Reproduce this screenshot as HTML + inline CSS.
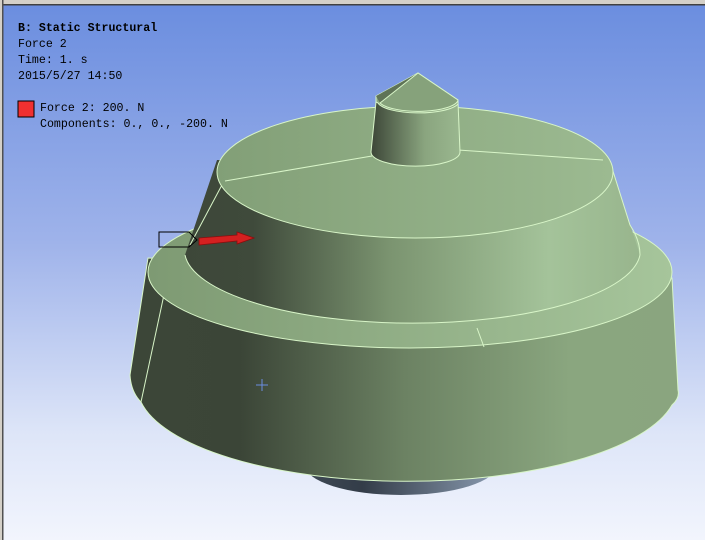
<!DOCTYPE html>
<html><head><meta charset="utf-8"><style>
html,body{margin:0;padding:0;width:705px;height:540px;overflow:hidden}
#v{position:absolute;left:0;top:0;width:705px;height:540px}
.t{position:absolute;left:18px;font-family:"Liberation Mono",monospace;font-size:11.6px;color:#000;white-space:pre;line-height:12px}
</style></head><body>
<svg id="v" width="705" height="540" viewBox="0 0 705 540">
<defs>
<linearGradient id="bg" x1="0" y1="0" x2="0" y2="1">
<stop offset="0" stop-color="#6a8ddf"/><stop offset="0.45" stop-color="#9fb3ea"/><stop offset="0.8" stop-color="#dde5f8"/><stop offset="1" stop-color="#f2f5fd"/></linearGradient>
<linearGradient id="side" x1="130" y1="0" x2="680" y2="0" gradientUnits="userSpaceOnUse">
<stop offset="0" stop-color="#3c4638"/><stop offset="0.2" stop-color="#3b4537"/><stop offset="0.5" stop-color="#6c8263"/><stop offset="0.8" stop-color="#8aa67f"/><stop offset="1" stop-color="#8aa57f"/></linearGradient>
<linearGradient id="cone" x1="185" y1="0" x2="640" y2="0" gradientUnits="userSpaceOnUse">
<stop offset="0" stop-color="#3d4739"/><stop offset="0.15" stop-color="#3f4a3b"/><stop offset="0.45" stop-color="#7b9470"/><stop offset="0.8" stop-color="#a4c39a"/><stop offset="1" stop-color="#98b58d"/></linearGradient>
<linearGradient id="top" x1="217" y1="0" x2="612" y2="0" gradientUnits="userSpaceOnUse">
<stop offset="0" stop-color="#829f77"/><stop offset="1" stop-color="#9cba91"/></linearGradient>
<linearGradient id="ring" x1="150" y1="0" x2="672" y2="0" gradientUnits="userSpaceOnUse">
<stop offset="0" stop-color="#7e9a73"/><stop offset="1" stop-color="#a6c59b"/></linearGradient>
<linearGradient id="cyl" x1="372" y1="0" x2="460" y2="0" gradientUnits="userSpaceOnUse">
<stop offset="0" stop-color="#3e4839"/><stop offset="0.6" stop-color="#8aa57f"/><stop offset="1" stop-color="#9ab78f"/></linearGradient>
<linearGradient id="bot" x1="305" y1="0" x2="497" y2="0" gradientUnits="userSpaceOnUse">
<stop offset="0" stop-color="#3f4a55"/><stop offset="0.3" stop-color="#333c48"/><stop offset="1" stop-color="#8a9bb0"/></linearGradient>
</defs>
<rect width="705" height="540" fill="url(#bg)"/>
<rect width="705" height="4" fill="#d4d0c8"/><rect y="4" width="705" height="1.5" fill="#404040"/>
<rect width="2" height="540" fill="#d4d0c8"/><rect x="2" width="1.5" height="540" fill="#505050"/>
<path d="M305,465 A96,30 0 0 0 497,465 L497,455 L305,455 Z" fill="url(#bot)"/>
<path d="M148,258 L130,375 Q131,392 141,402 A270,95 0 0 0 672,405 Q680,398 678,390 L672,278 Z" fill="url(#side)" stroke="#d8f5c8" stroke-width="1"/>
<line x1="165" y1="290" x2="141" y2="402" stroke="#d8f5c8"/>
<ellipse cx="410" cy="272" rx="262" ry="76" fill="url(#ring)" stroke="#d8f5c8"/>
<line x1="477" y1="328" x2="484" y2="347" stroke="#d8f5c8"/>
<path d="M217,160 L185,255 A228,73 0 0 0 640,255 L612,168 Z" fill="url(#cone)"/>
<path d="M185,255 A228,73 0 0 0 640,255" fill="none" stroke="#d8f5c8"/>
<path d="M640,255 Q640,240 630,225 L612,168" fill="none" stroke="#d8f5c8"/>
<line x1="223" y1="183" x2="190" y2="245" stroke="#d8f5c8"/>
<ellipse cx="415" cy="172" rx="198" ry="66" fill="url(#top)" stroke="#d8f5c8"/>
<path d="M225,181 L372,156 M458,150 L603,160" stroke="#d8f5c8" fill="none"/>
<path d="M376,102 L371,152 A44,14 0 0 0 460,152 L458,102 Z" fill="url(#cyl)" stroke="#d8f5c8"/>
<path d="M376,102 L376,96 L418,73 L458,100 L458,104 A41,12 0 0 1 378,103 Z" fill="#8aa67f" stroke="#d8f5c8"/>
<path d="M376,96 L418,73 L380,103 Z" fill="#5f7356"/>
<path d="M380,103 L418,73 L458,100 A40,12 0 0 1 380,103 Z" fill="#86a27b" stroke="#d8f5c8"/>
<path d="M159,232 L189,232 L197,240 L189,247 L159,247 Z" fill="none" stroke="#000"/>
<path d="M199,238 L237,235 L237,232 L254,238 L237,244 L237,241 L199,245 Z" fill="#d42020" stroke="#8a0e0e" stroke-width="0.8"/>
<path d="M262,379 V391 M256,385 H268" stroke="#6a8de0" stroke-width="1"/>
<rect x="18" y="101" width="16" height="16" fill="#f03030" stroke="#000"/>
</svg>
<div class="t" style="top:23px;font-weight:bold">B: Static Structural</div>
<div class="t" style="top:39px">Force 2</div>
<div class="t" style="top:55px">Time: 1. s</div>
<div class="t" style="top:71px">2015/5/27 14:50</div>
<div class="t" style="top:103px;left:40px">Force 2: 200. N</div>
<div class="t" style="top:119px;left:40px">Components: 0., 0., -200. N</div>
</body></html>
